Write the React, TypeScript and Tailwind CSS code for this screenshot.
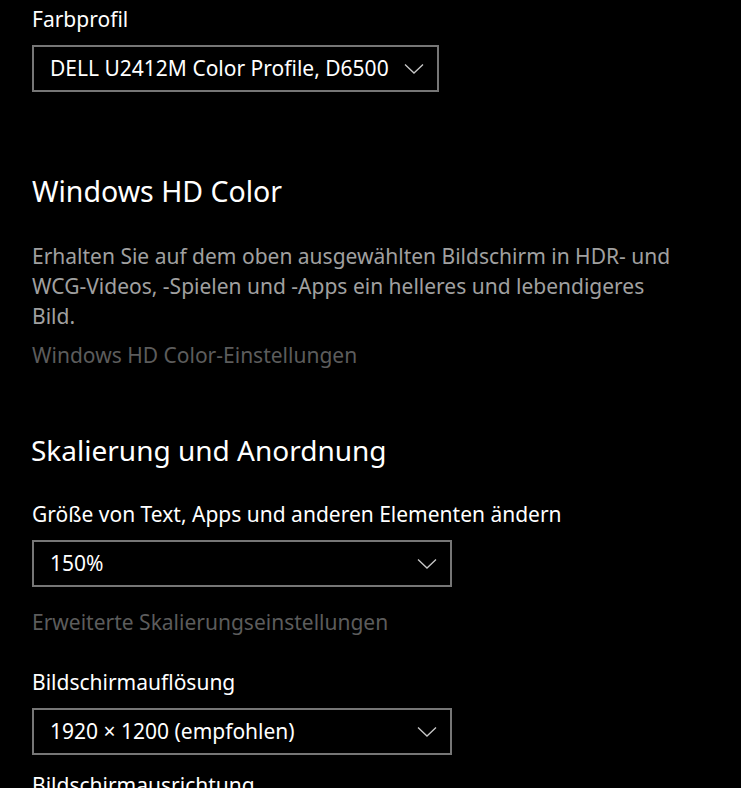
import React from 'react';

const font = { fontFamily: '"Noto Sans", "Open Sans", sans-serif' };

function Chevron() {
  return (
    <svg width="20" height="12" viewBox="0 0 20 12" className="shrink-0" aria-hidden="true">
      <path d="M1 1.5 L10 10 L19 1.5" fill="none" stroke="#c8c8c8" strokeWidth="1.3" />
    </svg>
  );
}

function Dropdown({ value, width }: { value: string; width: string }) {
  return (
    <div
      className={`${width} h-[47px] border-2 border-[#767676] flex items-center justify-between pl-4 pr-[13px] text-white text-[21px]`}
    >
      <span className="leading-none whitespace-nowrap">{value}</span>
      <Chevron />
    </div>
  );
}

export default function App() {
  return (
    <div className="w-[741px] h-[788px] bg-black overflow-hidden pl-8" style={font}>
      <div className="flex flex-col">
        <div className="mt-[5px] h-[28px] leading-[28px] text-[21px] text-white">Farbprofil</div>
        <div className="mt-[12px]">
          <Dropdown value="DELL U2412M Color Profile, D6500" width="w-[407px]" />
        </div>

        <h2 className="mt-[81px] h-[36px] leading-[36px] text-[28.5px] text-white">
          Windows HD Color
        </h2>
        <p className="mt-[32px] w-[652px] text-[21px] leading-[30px] text-[#a0a0a0]">
          Erhalten Sie auf dem oben ausgewählten Bildschirm in HDR- und WCG-Videos, -Spielen und -Apps ein helleres und lebendigeres Bild.
        </p>
        <div className="mt-[9px] h-[30px] leading-[30px] text-[21px] text-[#5c5c5c]">
          Windows HD Color-Einstellungen
        </div>

        <h2 className="mt-[60px] -ml-px h-[40px] leading-[40px] text-[28px] text-white">
          Skalierung und Anordnung
        </h2>
        <div className="mt-[30px] h-[28px] leading-[28px] text-[21px] text-white">
          Größe von Text, Apps und anderen Elementen ändern
        </div>
        <div className="mt-[12px]">
          <Dropdown value="150%" width="w-[420px]" />
        </div>
        <div className="mt-[21px] h-[28px] leading-[28px] text-[21px] text-[#5c5c5c]">
          Erweiterte Skalierungseinstellungen
        </div>

        <div className="mt-[32px] h-[28px] leading-[28px] text-[21px] text-white">Bildschirmauflösung</div>
        <div className="mt-[12px]">
          <Dropdown value="1920 × 1200 (empfohlen)" width="w-[420px]" />
        </div>
        <div className="mt-[16px] h-[28px] leading-[28px] text-[21px] text-white">Bildschirmausrichtung</div>
      </div>
    </div>
  );
}
